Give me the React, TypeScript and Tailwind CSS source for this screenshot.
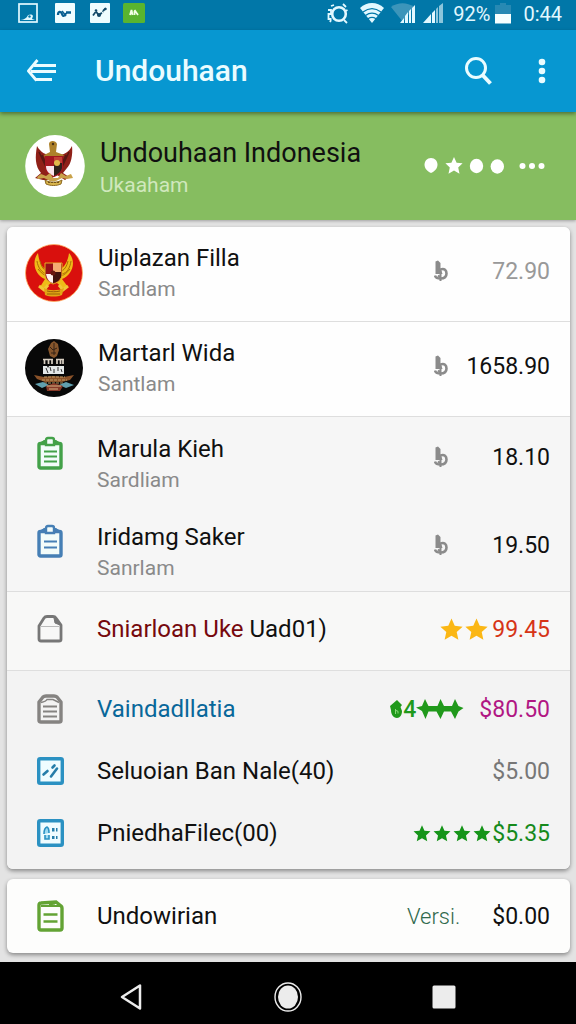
import type { ReactNode } from 'react';

type IconProps = { className?: string };

const STAR = 'M12 1.5l3.1 7 7.6.8-5.7 5.1 1.6 7.5L12 18.1l-6.6 3.8L7 14.4 1.3 9.3l7.6-.8z';

function Star({ className }: IconProps) {
  return (
    <svg viewBox="0 0 24 24" className={className} fill="currentColor" aria-hidden="true">
      <path d={STAR} />
    </svg>
  );
}

function StatusBar() {
  return (
    <div className="flex h-[30px] items-start justify-between bg-[#0177a8] pt-[3px] pr-[14px] pl-[18px] text-[#e2f8ff]">
      <div className="flex">
        <svg viewBox="0 0 20 20" className="h-5 w-5">
          <rect x="1" y="1" width="18" height="18" fill="none" stroke="currentColor" strokeWidth="1.7" />
          <path d="M2 17c3 0 5-1 7-3 1-3 5-3 6-1l-1 3 3 1zM5 15h4" fill="currentColor" />
          <circle cx="11.5" cy="13.5" r="1.2" fill="#0177a8" />
        </svg>
        <svg viewBox="0 0 20 20" className="ml-[17px] h-5 w-5">
          <rect width="20" height="20" rx="1" fill="#effdff" />
          <path d="M3 12c0-4 3-4 4-1s3 2 4-1M11 9.500h5" fill="none" stroke="#075f91" strokeWidth="2.3" />
          <path d="M7 8l4 5" stroke="#075f91" strokeWidth="1.5" />
        </svg>
        <svg viewBox="0 0 20 20" className="ml-[15px] h-5 w-5">
          <rect width="20" height="20" rx="1" fill="#effdff" />
          <path d="M3 12.500l3-4 3 4 4-4M13 8l3-3" fill="none" stroke="#134968" strokeWidth="1.8" strokeDasharray="4 1" />
          <circle cx="9" cy="12" r="2" fill="#134968" />
          <circle cx="6" cy="7.500" r="1.300" fill="#134968" />
          <circle cx="15.500" cy="6" r="1.200" fill="#134968" />
        </svg>
        <svg viewBox="0 0 22 20" className="ml-[13px] h-5 w-[22px]">
          <rect width="22" height="20" rx="1.5" fill="#59b42f" />
          <path d="M7 12l1.500-5 1 5M11.500 7l3.500 5M11.500 8v4" fill="none" stroke="#f2ffe5" strokeWidth="1.8" />
        </svg>
      </div>
      <div className="flex">
        <svg viewBox="0 0 22 21" className="h-[21px] w-[22px]" fill="none" stroke="currentColor">
          <circle cx="12" cy="11" r="6.800" strokeWidth="2.6" />
          <path d="M4 3l3-1M19 4l-3-3M4 17l-1 2M17 17l3 3M1 7h3v4H1.500v5h3M18.500 8l2-1" strokeWidth="1.8" />
        </svg>
        <svg viewBox="0 0 24 20" className="ml-[11px] h-5 w-6" fill="currentColor">
          <path d="M12 20L0 5C7-1.600 17-1.600 24 5z" />
          <path d="M3 9c6-4.500 12-4.500 18 0M5.500 12.500c4.500-3.200 8.500-3.200 13 0M8 15.700c3-2 5-2 8 0" fill="none" stroke="#0177a8" strokeWidth="1.3" />
        </svg>
        <svg viewBox="0 0 24 20" className="ml-[7px] h-5 w-6" fill="currentColor">
          <path d="M0 4C7-1 16-1 23 4L12 19z" fill="#3c95ba" />
          <path d="M9 20l4-5v5zM14 13l3-4v11h-3zM18 8l2-2v14h-2zM21 5l3-3v18h-3z" />
        </svg>
        <svg viewBox="0 0 20 20" className="ml-2 h-5 w-5" fill="currentColor">
          <path d="M0 20l8-9v9zM9 10l3-3v13H9z" />
          <path d="M13 6l2-2v16h-2zM16 3l4-3v20h-4z" fill="#8cc6dc" />
        </svg>
        <span className="ml-[10px] text-[20px] leading-[22px]">92%</span>
        <svg viewBox="0 0 16 21" className="ml-[5px] h-[21px] w-4">
          <path d="M5 0h6v2h5v10H0V2h5z" fill="#2789b3" />
          <path d="M0 11h16v9.500H0z" fill="#f6ffff" />
        </svg>
        <span className="ml-3 text-[20px] leading-[22px]">0:44</span>
      </div>
    </div>
  );
}

function AppBar() {
  return (
    <header className="relative flex h-[82px] items-center bg-[#0797d1] pr-6 pl-[27px] text-[#eafcff] shadow-[0_2px_4px_rgba(0,0,0,0.4)]">
      <button type="button" aria-label="Kembali" className="flex w-[30px]">
        <svg viewBox="0 0 30 24" className="h-6 w-[30px]" fill="none" stroke="currentColor" strokeWidth="2.8">
          <path d="M7 6.500h22M4 12.500h25M8 20.500h17" />
          <path d="M10.500 1L1 12.500M1 11.500l8.500 10" />
        </svg>
      </button>
      <h1 className="ml-[38px] grow text-[30px] leading-9 font-medium">Undouhaan</h1>
      <button type="button" aria-label="Cari" className="flex">
        <svg viewBox="0 0 30 30" className="h-[30px] w-[30px]" fill="none" stroke="currentColor">
          <circle cx="13" cy="12" r="9.500" strokeWidth="3" />
          <path d="M19.500 19l8 8.500" strokeWidth="4" />
        </svg>
      </button>
      <button type="button" aria-label="Menu" className="ml-[39px] flex w-5 justify-center">
        <svg viewBox="0 0 8 26" className="h-[26px] w-2" fill="currentColor">
          <circle cx="4" cy="4" r="3.300" />
          <circle cx="4" cy="13" r="3.300" />
          <circle cx="4" cy="22" r="3.300" />
        </svg>
      </button>
    </header>
  );
}

function GarudaWhite() {
  return (
    <svg viewBox="0 0 60 62" className="h-[62px] w-[60px] shrink-0" aria-hidden="true">
      <ellipse cx="30" cy="31" rx="29.800" ry="31" fill="#fff" />
      <path d="M12 11c4 7 9 9 15 9h6c6 0 11-3 14-9 1 9-1 18-5 22l-4 5 6 4-4 3-8-5-8 5h-6l-8-2 6-5c-6-7-6-16-4-27z" fill="#8f2018" />
      <path d="M14 17l7 15M17 20l6 13M44 17l-7 15M41 20l-6 13" stroke="#571712" strokeWidth="1.500" />
      <path d="M24 9c0-4 7-4 8 0l-1 8 8 3-2 3H20l-1-3 6-3z" fill="#ad812a" />
      <circle cx="28" cy="9" r="1.200" fill="#473116" />
      <path d="M20 21h18v12c-2 6-6 8-9 9-4-1-8-4-9-9z" fill="#a31620" />
      <path d="M29 31h-8c0 5 3 8 8 10z" fill="#fae4eb" />
      <path d="M29 22h8v9h-8z" fill="#c34036" />
      <path d="M29 28h8v5c-1 4-4 6-8 8z" fill="#302119" />
      <circle cx="32" cy="28" r="3" fill="#e1b84a" />
      <path d="M12 42l4-3 5 2 4-3 3 5h5l3-5 5 3 5-2 2 4-6 1-5-1-4 2c-4 2-7 2-10 0l-4-2-6 1z" fill="#c9a24a" />
      <path d="M20 45c5 3 12 3 17 0l-1 4c-5 2-10 2-15 0z" fill="#d9b54a" stroke="#8d6921" />
      <path d="M23 47.500h11" stroke="#74551c" strokeDasharray="2 1" />
    </svg>
  );
}

function GarudaRed() {
  return (
    <svg viewBox="0 0 58 58" className="h-[58px] w-[58px] shrink-0" aria-hidden="true">
      <circle cx="29" cy="29" r="28.500" fill="#d9100d" stroke="#ffae62" strokeWidth=".8" />
      <path d="M13 9C6 18 10 31 20 35l-5 8 4 2 7-6h6l7 6 4-2-6-8C47 31 52 18 44 9c-1 8-4 13-8 16v-6H20v6c-4-3-6-8-7-16z" fill="#efbb18" />
      <path d="M12 17c1 7 5 12 10 13M15 17c1 5 3 8 6 10M46 17c-1 7-4 12-9 13M43 17c-1 5-3 8-6 10M13 25c3 4 6 6 9 7M45 25c-3 4-6 6-9 7" fill="none" stroke="#ad6c06" strokeWidth="1" />
      <path d="M20 19h17v13c-2 5-5 7-9 8-4-2-7-4-8-8z" fill="#961019" stroke="#e3b123" />
      <path d="M28 19h8v9h-8z" fill="#f4ad72" />
      <path d="M21 30h7v9c-4-1-6-4-7-9z" fill="#fff1ec" />
      <path d="M28 28h8v5c-2 4-5 5-8 6z" fill="#42130e" />
      <circle cx="28" cy="29" r="2.500" fill="#6a170e" />
      <path d="M14 42l5 4 4-5M43 42l-5 4-4-5" fill="none" stroke="#f1c637" strokeWidth="3" />
      <path d="M19 44c5 3 14 3 20 0l-2 7c-5 2-12 2-17 0z" fill="#e2a514" />
      <path d="M22 47c4 1 9 1 13 0M22 50h13" fill="none" stroke="#986007" />
    </svg>
  );
}

function Emblem() {
  return (
    <svg viewBox="0 0 58 58" className="h-[58px] w-[58px] shrink-0" aria-hidden="true">
      <circle cx="29" cy="29" r="29" fill="#080808" />
      <path d="M26 4l3-2 4 3 1 6-2 6-3 2-4-2-2-7z" fill="#86562c" />
      <path d="M25 8l3 3 4-2M26 14h5M29 4v12" stroke="#352316" fill="none" />
      <path d="M19.500 20v5M23.500 20v5M27 20v5M32 20v5M35.500 20v5M38 20v5M18 20.500h10M31 20.500h8" stroke="#d8cfc2" strokeWidth="1.700" />
      <path d="M18 27h4l1 2 1-2h15v8H18z" fill="#e4e8e8" />
      <path d="M21 29l2 5M25 28l1 4M29 30v4M33 28v4M36 30l1 3" stroke="#333" />
      <path d="M9 36l10 2 9-1 11 1 10-2-4 5-8 2H20l-8-3z" fill="#8a5229" />
      <path d="M19 38h21M17 41h25M19 44h20" stroke="#bd9a64" strokeDasharray="3 1" />
      <path d="M10 45l8-2 6 3-7 3zM34 46l7-3 8 3-8 3z" fill="#609fae" />
      <path d="M21 47l8-3 9 3-3 5H22z" fill="#873928" />
      <path d="M22 47h14M24 50h9" stroke="#d8b483" />
    </svg>
  );
}

function Clipboard({ className, lines }: IconProps & { lines: number }) {
  return (
    <svg viewBox="0 0 26 34" className={className} fill="none" stroke="currentColor" aria-hidden="true">
      <rect x="2" y="7.500" width="22" height="24.500" rx="1.500" fill="#f3fcfa" strokeWidth="3.400" />
      <path d="M3 7l4-2.500h12L23 7z" fill="currentColor" strokeWidth="1" />
      <path d="M9 9V4q0-2 2-2h4q2 0 2 2v5z" fill="#f3fcfa" strokeWidth="2.400" />
      <path d={lines === 3 ? 'M7 15.500h13M7 20.500h13M7 25.500h13' : 'M7 17.500h13M7 23.500h13'} strokeWidth="2" />
    </svg>
  );
}

function Bag() {
  return (
    <svg viewBox="0 0 26 28" className="h-7 w-[26px] text-[#777]" fill="none" stroke="currentColor" aria-hidden="true">
      <path d="M2 11L7 3q1-1.500 3-1.500h6q2 0 3 1.500l5 7v14.500Q24 26 22 26H4q-2 0-2-2z" strokeWidth="2.800" strokeLinejoin="round" />
      <path d="M4 11.500h18" strokeWidth="1" stroke="#bbb" />
      <path d="M17 3l1 5 5 2-4-7z" fill="currentColor" strokeWidth="1" />
    </svg>
  );
}

function Note() {
  return (
    <svg viewBox="0 0 26 30" className="h-[30px] w-[26px] text-[#858381]" fill="none" stroke="currentColor" aria-hidden="true">
      <path d="M2 8l4-5q1-1 3-1h8q2 0 3 1l4 5v18.500q0 1.500-2 1.500H4q-2 0-2-1.500z" strokeWidth="3.400" strokeLinejoin="round" />
      <path d="M4 8.500q5-1 6-3h6l6 3" strokeWidth="1.500" />
      <path d="M6 12.500h14M6 17.500h14M6 22.500h14" strokeWidth="2.200" />
    </svg>
  );
}

function Frame({ children }: { children: ReactNode }) {
  return (
    <svg viewBox="0 0 27 28" className="h-7 w-[27px]" aria-hidden="true">
      <rect x="1.700" y="1.700" width="23.600" height="24.600" rx="1.500" fill="#effcff" stroke="#2b91c2" strokeWidth="3.400" />
      {children}
    </svg>
  );
}

function ChartIcon() {
  return (
    <Frame>
      <path d="M6.500 17.500l4-3.500M14 19.500l6-8M15.500 10.500l2-2" stroke="#257da9" strokeWidth="2.600" strokeLinecap="round" />
    </Frame>
  );
}

function GridIcon() {
  return (
    <Frame>
      <path d="M7 15q0-6 3-7 2 1 2 6M8 16v4h4v-4" fill="#9edaf1" stroke="#2b91c2" strokeWidth="1.600" />
      <path d="M15 9h2.500v3.500H15zM19 9h1.500v3.500H19zM15 17h2.500v3H15zM19 17h1.500v3H19z" fill="#257da9" />
    </Frame>
  );
}

function GreenNote() {
  return (
    <svg viewBox="0 0 27 32" className="h-8 w-[27px] text-[#63a334]" fill="none" stroke="currentColor" aria-hidden="true">
      <path d="M2 5q0-2 2-2l15-1 5 4q1 .7 1 2v20q0 2-2 2H4q-2 0-2-2z" strokeWidth="3.400" />
      <path d="M4 6h19M12 4.500l6-1" strokeWidth="2" />
      <path d="M6.500 14.500h14M6.500 21.500h14" strokeWidth="2.600" />
    </svg>
  );
}

function Coin() {
  return (
    <svg viewBox="0 0 14 22" className="h-[22px] w-[14px] shrink-0 text-[#8b8b8b]" fill="none" stroke="currentColor" aria-hidden="true">
      <path d="M1.500 1.500L4 .5 6.500 3v5l2 6H1.500z" fill="currentColor" stroke="none" />
      <path d="M6.500 9.500c4-1.500 6 1 6 4 0 3.500-2.500 5-6 5C3.500 18.500 1.500 17.500 1 15.500" strokeWidth="2.600" />
      <path d="M6.500 11v10M4 15.500l2.500 2" strokeWidth="2" />
    </svg>
  );
}

function SparkStars() {
  return (
    <svg viewBox="0 0 48 22" className="h-[22px] w-12" fill="currentColor" aria-hidden="true">
      <path d="M0 9.500l6-1.500 3-7 3.500 7h9l3-7 3.500 7h8l3-7 3.500 7 5 2-5 3.500-3.500 7.500-4-7.500h-7l-3.500 7.500-4-7.500h-8L9.500 21 6 13z" />
    </svg>
  );
}

function Leaf() {
  return (
    <svg viewBox="0 0 12 20" className="h-5 w-3" fill="currentColor" aria-hidden="true">
      <path d="M0 7l7-6 5 5-1.500 2L12 12c0 4-2 7-5 7-4 0-6-4-6-8z" />
      <path d="M5.500 10v5M6 11.500q3 0 2 3" fill="none" stroke="#8bd77a" />
    </svg>
  );
}

const NAME = 'text-[24px] leading-[31px]';
const SUB = 'text-[21px] leading-[31px] text-[#8a8a8a]';
const AMOUNT = 'text-[23px] leading-[31px]';

function AvatarRow({ avatar, name, sub, amount, tone }: { avatar: ReactNode; name: string; sub: string; amount: string; tone: string }) {
  return (
    <li className="flex h-[95px] items-center border-b border-[#dedede] bg-[#fefefe] pr-5 pl-[18px]">
      <div className="pb-[3px]">{avatar}</div>
      <div className="ml-[15px] grow">
        <div className={NAME}>{name}</div>
        <div className={SUB}>{sub}</div>
      </div>
      <div className="flex items-center pb-[6px]">
        <Coin />
        <span className={`w-[102px] text-right ${AMOUNT} ${tone}`}>{amount}</span>
      </div>
    </li>
  );
}

function ClipRow({ icon, name, sub, amount }: { icon: ReactNode; name: string; sub: string; amount: string }) {
  return (
    <li className="flex items-start pr-5 pl-[18px]">
      <div className="flex h-[38px] w-[50px] items-center justify-center">{icon}</div>
      <div className="ml-[22px] grow">
        <div className={NAME}>{name}</div>
        <div className={SUB}>{sub}</div>
      </div>
      <div className="flex h-[46px] items-center">
        <Coin />
        <span className={`w-[102px] text-right ${AMOUNT}`}>{amount}</span>
      </div>
    </li>
  );
}

function LineRow({ icon, name, children }: { icon: ReactNode; name: ReactNode; children: ReactNode }) {
  return (
    <li className="flex h-[62px] items-center pr-5 pl-[18px]">
      <div className="flex w-[50px] justify-center">{icon}</div>
      <div className={`ml-[22px] grow ${NAME}`}>{name}</div>
      <div className={`flex items-center ${AMOUNT}`}>{children}</div>
    </li>
  );
}

const CARD = 'mr-[6px] ml-[7px] overflow-hidden rounded-md shadow-[0_2px_4px_rgba(0,0,0,0.4)]';

export default function App() {
  return (
    <div className="flex min-h-screen flex-col bg-[#e3e3e3] font-['Roboto','Liberation_Sans',sans-serif] text-[#101010]">
      <StatusBar />
      <AppBar />
      <section className="flex h-[108px] items-center bg-[#86bd60] pr-[31px] pl-[25px] shadow-[0_1px_3px_rgba(0,0,0,0.3)]">
        <GarudaWhite />
        <div className="ml-[15px] grow pt-1">
          <h2 className="text-[27px] leading-[34px]">Undouhaan Indonesia</h2>
          <p className="text-[21px] leading-[31px] text-[#d0e8bd]">Ukaaham</p>
        </div>
        <div className="flex items-center text-white">
          <svg viewBox="0 0 80 18" className="h-[18px] w-20" fill="currentColor" aria-hidden="true">
            <path d="M7 1c4 0 6.500 3 6.500 7 0 3-2 5-4.500 7l-2 1-2-1C2.500 13 .5 11 .5 8 .5 4 3 1 7 1z" />
            <path d="M30 0l2.600 5.700 6 .6-4.400 4.200 1.300 6.200-5.500-3.200-5.500 3.200 1.300-6.200-4.400-4.200 6-.6z" />
            <ellipse cx="52.500" cy="9" rx="6.700" ry="7.200" />
            <ellipse cx="73.300" cy="9.500" rx="6.700" ry="7.200" />
          </svg>
          <button type="button" aria-label="Lainnya" className="ml-[15px] flex">
            <svg viewBox="0 0 26 8" className="h-2 w-[26px]" fill="currentColor">
              <circle cx="3.500" cy="4" r="3" />
              <circle cx="13" cy="4" r="3" />
              <circle cx="22.500" cy="4" r="3" />
            </svg>
          </button>
        </div>
      </section>

      <main className="flex grow flex-col gap-[10px] pt-[7px] pb-2">
        <div className={`${CARD} bg-[#f6f6f6]`}>
          <ul>
            <AvatarRow avatar={<GarudaRed />} name="Uiplazan Filla" sub="Sardlam" amount="72.90" tone="text-[#999]" />
            <AvatarRow avatar={<Emblem />} name="Martarl Wida" sub="Santlam" amount="1658.90" tone="" />
          </ul>
          <ul className="flex flex-col gap-[26px] border-b border-[#dedede] pt-[17px] pb-[7px]">
            <ClipRow icon={<Clipboard lines={3} className="h-[34px] w-[26px] text-[#43a149]" />} name="Marula Kieh" sub="Sardliam" amount="18.10" />
            <ClipRow icon={<Clipboard lines={2} className="h-[34px] w-[26px] text-[#467fb5]" />} name="Iridamg Saker" sub="Sanrlam" amount="19.50" />
          </ul>
          <ul className="border-b border-[#dedede] bg-[#f8f8f7] pt-[6px] pb-[10px]">
            <LineRow
              icon={<Bag />}
              name={
                <>
                  <span className="text-[#76090d]">Sniarloan Uke</span> Uad01)
                </>
              }
            >
              <Star className="h-[25px] w-[25px] text-[#fbb714]" />
              <Star className="h-[25px] w-[25px] text-[#fbb714]" />
              <span className="ml-[3px] text-[#d63416]">99.45</span>
            </LineRow>
          </ul>
          <ul className="bg-[#f3f3f3] pt-[7px] pb-[5px]">
            <LineRow icon={<Note />} name={<a href="#vaindadllatia" className="text-[#08679a]">Vaindadllatia</a>}>
              <span className="flex items-center font-medium text-[#20991b]">
                <Leaf />
                <span className="ml-px">4</span>
                <SparkStars />
              </span>
              <span className="ml-[15px] text-[#b11683]">$80.50</span>
            </LineRow>
            <LineRow icon={<ChartIcon />} name="Seluoian Ban Nale(40)">
              <span className="text-[#777]">$5.00</span>
            </LineRow>
            <LineRow icon={<GridIcon />} name="PniedhaFilec(00)">
              <span className="flex text-[#159419]">
                <Star className="h-[19px] w-5" />
                <Star className="h-[19px] w-5" />
                <Star className="h-[19px] w-5" />
                <Star className="h-[19px] w-5" />
              </span>
              <span className="text-[#168a1c]">$5.35</span>
            </LineRow>
          </ul>
        </div>

        <div className={`${CARD} bg-[#fdfdfc] py-[6px]`}>
          <ul>
            <LineRow icon={<GreenNote />} name="Undowirian">
              <span className="text-[22px] font-light text-[#30694c]">Versi.</span>
              <span className="ml-8">$0.00</span>
            </LineRow>
          </ul>
        </div>
      </main>

      <nav className="flex h-[62px] items-center justify-center gap-32 bg-black pt-2 text-[#ececec]">
        <button type="button" aria-label="Kembali" className="flex w-7 justify-center">
          <svg viewBox="0 0 28 28" className="h-7 w-7" fill="none" stroke="currentColor" strokeWidth="2.500" strokeLinejoin="round">
            <path d="M22 2.500v23L4 14z" />
          </svg>
        </button>
        <button type="button" aria-label="Beranda" className="flex w-7 justify-center">
          <svg viewBox="0 0 28 30" className="h-[30px] w-7">
            <ellipse cx="14" cy="15" rx="13" ry="14" fill="none" stroke="currentColor" strokeWidth="1.400" />
            <ellipse cx="14" cy="15" rx="10" ry="11.500" fill="currentColor" />
          </svg>
        </button>
        <button type="button" aria-label="Terkini" className="flex w-7 justify-center">
          <svg viewBox="0 0 24 24" className="h-6 w-6" fill="currentColor">
            <rect width="23" height="23" x=".500" y=".500" rx="1.500" />
          </svg>
        </button>
      </nav>
    </div>
  );
}
